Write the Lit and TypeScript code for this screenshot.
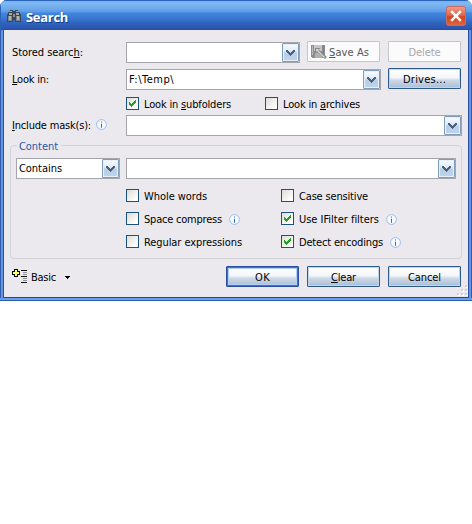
import { LitElement, html, css, svg, nothing } from "lit";
import { customElement, property } from "lit/decorators.js";

/** A line of text spaced out so that it fills a given width. */
@customElement("fit-text")
class FitText extends LitElement {
  @property() text = "";
  @property({ type: Number }) accel = -1;
  @property({ type: Number }) width = 0;
  static styles = css`
    :host { display: block; flex: none; white-space: pre; line-height: 14px; height: 14px; padding-top: 1px; }
    span.line { display: inline-block; }
    u { text-decoration: underline 1px; text-underline-offset: 1px; text-decoration-skip-ink: none; }
  `;
  render() {
    const { text: t, accel: a } = this;
    return html`<span class="line">${a < 0 ? t : html`${t.slice(0, a)}<u>${t[a]}</u>${t.slice(a + 1)}`}</span>`;
  }
  updated() {
    const line = this.renderRoot.querySelector<HTMLElement>(".line")!;
    line.style.letterSpacing = "0px";
    const natural = line.getBoundingClientRect().width;
    if (this.width && natural) line.style.letterSpacing = `${(this.width - natural) / this.text.length}px`;
  }
}

@customElement("combo-box")
class ComboBox extends LitElement {
  @property() value = "";
  @property({ type: Number }) textWidth = 0;
  static styles = css`
    :host { display: flex; flex: none; box-sizing: border-box; height: 21px; border: 1px solid #a5a5ad; background: #fff; justify-content: space-between; }
    fit-text { margin: 2px 0 0 2px; }
    .drop { margin-left: auto; width: 17px; height: 19px; box-sizing: border-box; border: 1px solid #7f9dbb; border-radius: 1px; box-shadow: inset 0 0 0 1px #e6f0fa; background: linear-gradient(#fbfdff 0, #e0ebf6 40%, #b8cee6 55%, #bfd4ea 100%); }
    svg { display: block; }
  `;
  render() {
    return html`${this.value ? html`<fit-text .text=${this.value} .width=${this.textWidth}></fit-text>` : nothing}
      <div class="drop"><svg width="15" height="17" shape-rendering="crispEdges"><path d="M3 6h2v1h1v1h1v1h1v-1h1v-1h1v-1h2v2h-1v1h-1v1h-1v1h-1v1h-1v-1h-1v-1h-1v-1h-1v-1h-1z" fill="#4d5f7e"/></svg></div>`;
  }
}

@customElement("check-box")
class CheckBox extends LitElement {
  @property({ type: Boolean }) checked = false;
  @property() label = "";
  @property({ type: Number }) accel = -1;
  @property({ type: Number }) textWidth = 0;
  static styles = css`
    :host { display: flex; flex: none; height: 13px; }
    .box { width: 13px; height: 13px; box-sizing: border-box; border: 1px solid #1c5180; background: linear-gradient(135deg, #dcdcd7, #fff 85%); margin-right: 5px; }
    svg { display: block; }
  `;
  render() {
    return html`<div class="box">${this.checked
        ? html`<svg width="11" height="11" shape-rendering="crispEdges"><path d="M2 4h1v1h1v1h1v-1h1v-1h1v-1h1v-1h1v3h-1v1h-1v1h-1v1h-1v1h-1v-1h-1v-1h-1z" fill="#21a121"/></svg>`
        : nothing}</div>
      <fit-text .text=${this.label} .accel=${this.accel} .width=${this.textWidth}></fit-text>`;
  }
}

@customElement("push-button")
class PushButton extends LitElement {
  @property() label = "";
  @property() kind = "";
  @property({ type: Number }) accel = -1;
  @property({ type: Number }) textWidth = 0;
  static styles = css`
    :host { display: block; flex: none; width: 73px; }
    .face { height: 21px; box-sizing: border-box; display: flex; justify-content: center; border: 1px solid #2c5a8c; border-radius: 1px; box-shadow: inset 0 0 0 1px #c5d4e6; background: linear-gradient(#fff 0, #f4f6fa 45%, #cdd8e6 60%, #a9bdd6 100%); }
    .face.focus { border-color: #2a50a4; box-shadow: inset 0 0 0 1px #3d72cc, inset 0 0 0 2px #b4cdf3; }
    .face.off { border-color: #c6c5c9; background: #fbfbfc; box-shadow: none; color: #a8a7ab; }
    .face.save { color: #56555d; justify-content: flex-start; padding-left: 3px; }
    fit-text { margin-top: 3px; }
    .save fit-text { margin-left: 2px; }
    svg { display: block; margin-top: 2px; }
  `;
  render() {
    const save = this.kind.includes("save");
    return html`<div class="face ${this.kind}">${save
        ? html`<svg width="16" height="16" viewBox="0 0 16 16" shape-rendering="crispEdges">
            <path d="M0 1h14v13H1v-1H0z" fill="#8d8d8d"/><path d="M3 1h8v6H3z" fill="#c6c6c6"/><path d="M4 9h7v5H4z" fill="#b0b0b0"/><path d="M1 2h1v9H1z" fill="#bbb"/><path d="M12 2h1v11h-1z" fill="#7c7c7c"/>
            <g shape-rendering="auto"><path d="M4 4h5l-1 2 8 7-2 2-8-7-2 1z" fill="#888"/><path d="M5 5h3l-1 1 7 7-1 1-7-7-1 1z" fill="#d4d4d4"/></g></svg>`
        : nothing}<fit-text .text=${this.label} .accel=${this.accel} .width=${this.textWidth}></fit-text></div>`;
  }
}

const info = html`<svg class="info" width="11" height="11"><circle cx="5.5" cy="5.5" r="4.9" fill="#f6faff" stroke="#9dbce8"/><path d="M5 2.5h1v1H5zM5 4.8h1v4H5z" fill="#356cb8"/></svg>`;

const gripDots = [[9, 0], [5, 4], [9, 4], [1, 8], [5, 8], [9, 8]];

@customElement("app-root")
class AppRoot extends LitElement {
  static styles = css`
    :host { display: block; width: 472px; height: 524px; background: #fff; overflow: hidden; font: 11px "DejaVu Sans Condensed", "DejaVu Sans", sans-serif; font-stretch: condensed; color: #000; }
    .dialog { position: relative; box-sizing: border-box; width: 472px; height: 301px; border-radius: 7px 7px 0 0; overflow: hidden; display: flex; flex-direction: column; background: #3565bd; }
    .title { height: 30px; flex: none; box-sizing: border-box; display: flex; padding: 9px 6px 0 7px; color: #fff; box-shadow: inset 1px 1px 0 #2c62b8;
      background: linear-gradient(#2a62b6 0, #71aff0 1px, #7fbaf0 3px, #72abee 8px, #599be7 12px, #4285dc 13px, #3b79d2 18px, #3063be 23px, #2b54ab 29px, #244798 30px); }
    .title .name { font: bold 13px "Open Sans", "Noto Sans", sans-serif; line-height: 14px; text-shadow: 1px 1px 0 #183c8c; margin: 1px 0 0 5px; padding: 0; }
    .close { margin: -3px 0 0 auto; width: 20px; height: 20px; }
    .frame { flex: 1; padding: 0 4px 4px; background: linear-gradient(90deg, #2e5cb0 0 1px, #6595dc 1px 3px, #2850a2 3px 4px, transparent 4px calc(100% - 4px), #2850a2 calc(100% - 4px) calc(100% - 3px), #6595dc calc(100% - 3px) calc(100% - 1px), #2e5cb0 calc(100% - 1px)) 0 0 / 100% calc(100% - 3px) no-repeat, linear-gradient(transparent calc(100% - 4px), #23478f calc(100% - 4px) calc(100% - 3px), #6a9ee6 calc(100% - 3px) calc(100% - 1px), #2e5cb0 calc(100% - 1px)); }
    .body { height: 267px; background: #ebe9ee; display: flex; flex-direction: column; padding: 11px 7px 0 8px; box-sizing: border-box; }
    .row { display: flex; flex: none; }
    .row .cap { width: 114px; display: flex; flex: none; height: 14px; margin-top: 4px; }
    .info { display: block; flex: none; }
    .group { flex: none; height: 114px; margin: 9px -1px 0 -2px; box-sizing: border-box; border: 1px solid #d3d2d6; border-radius: 4px; padding: 12px 5px 0; }
    .group .legend { background: #ebe9ee; width: 44px; height: 14px; margin: -19px 0 0 1px; padding-left: 2px; color: #2857ab; box-sizing: border-box; }
    .opts { display: grid; grid-template-columns: 155px 1fr; row-gap: 10px; margin: 10px 0 0 110px; }
    .opts div { display: flex; height: 13px; }
    .opts .info { margin-top: 2px; }
    .grip { position: absolute; right: 4px; bottom: 4px; }
    .w174 { width: 174px; } .w255 { width: 255px; } .w336 { width: 336px; } .w104 { width: 104px; } .w330 { width: 330px; }
  `;

  option(label: string, width: number, checked: boolean, gap = 0) {
    return html`<div><check-box .label=${label} .textWidth=${width} .checked=${checked}></check-box>${gap
      ? html`<span style="width:${gap}px"></span>${info}`
      : nothing}</div>`;
  }

  render() {
    return html`<div class="dialog">
      <div class="title">
        <svg width="14" height="14" viewBox="0 0 14 14" shape-rendering="crispEdges">
          <path d="M3 1h3v1h2V1h3v2h2v2h1v8H8v-2H6v2H0V5h1V3h2z" fill="#3d4952"/>
          <path d="M3 2h2v1H3zM9 2h2v1H9zM2 4h3v2H2zM9 4h3v2H9z" fill="#9aa7b0"/>
          <path d="M1 7h4v5H1zM9 7h4v5H9z" fill="#7d8588"/><path d="M2 7h2v4H2zM10 7h2v4h-2z" fill="#b2b7b6"/><path d="M6 5h2v3H6z" fill="#8393a0"/>
        </svg>
        <fit-text class="name" .text=${"Search"} .width=${42}></fit-text>
        <svg class="close" viewBox="0 0 20 20">
          <defs><linearGradient id="red" x1="0" y1="0" x2="0" y2="1"><stop offset="0" stop-color="#ef9c87"/><stop offset=".45" stop-color="#df6a4c"/><stop offset=".55" stop-color="#d5431c"/><stop offset="1" stop-color="#de6642"/></linearGradient></defs>
          <rect x=".5" y=".5" width="19" height="19" rx="2" fill="url(#red)" stroke="#c9695f"/>
          <path d="M5.2 5.2l9.6 9.6M14.8 5.2l-9.6 9.6" stroke="#fff" stroke-width="2.5"/>
        </svg>
      </div>
      <div class="frame"><div class="body">
        <div class="row">
          <div class="cap"><fit-text .text=${"Stored search:"} .accel=${12} .width=${71}></fit-text></div>
          <combo-box class="w174" style="margin-top:1px"></combo-box>
          <push-button style="margin-left:7px" kind="off save" label="Save As" .accel=${0} .textWidth=${40}></push-button>
          <push-button style="margin-left:8px" kind="off" label="Delete" .textWidth=${32}></push-button>
        </div>
        <div class="row" style="margin-top:5px">
          <div class="cap"><fit-text .text=${"Look in:"} .accel=${0} .width=${37}></fit-text></div>
          <combo-box class="w255" style="margin-top:1px" .value=${"F:\\Temp\\"} .textWidth=${45}></combo-box>
          <push-button style="margin-left:7px" label="Drives..." .textWidth=${43}></push-button>
        </div>
        <div class="row" style="margin:7px 0 0 114px">
          <check-box checked label="Look in subfolders" .accel=${8} .textWidth=${87}></check-box>
          <check-box style="margin-left:34px" label="Look in archives" .accel=${8} .textWidth=${77}></check-box>
        </div>
        <div class="row" style="margin-top:5px">
          <div class="cap" style="margin-top:3px"><fit-text .text=${"Include mask(s):"} .accel=${0} .width=${79}></fit-text>
            <span style="margin:1px 0 0 5px">${info}</span></div>
          <combo-box class="w336"></combo-box>
        </div>
        <div class="group">
          <div class="legend"><fit-text .text=${"Content"} .width=${39}></fit-text></div>
          <div class="row" style="margin-top:5px">
            <combo-box class="w104" value="Contains" .textWidth=${43}></combo-box>
            <combo-box class="w330" style="margin-left:6px"></combo-box>
          </div>
          <div class="opts">
            ${this.option("Whole words", 63, false)}${this.option("Case sensitive", 69, false)}
            ${this.option("Space compress", 78, false, 7)}${this.option("Use IFilter filters", 80, true, 7)}
            ${this.option("Regular expressions", 98, false)}${this.option("Detect encodings", 84, true, 7)}
          </div>
        </div>
        <div class="row" style="margin-top:7px">
          <svg width="15" height="15" style="margin:3px 4px 0 0" shape-rendering="crispEdges">
            <path d="M2 0h4v2h2v4H6v2H2V6H0V2h2z" fill="#000"/><path d="M3 1h2v2h2v2H5v2H3V5H1V3h2z" fill="#ffff5a"/>
            <path d="M9 1h6v1H9zM9 7h6v1H9zM9 13h6v1H9z" fill="#111"/><path d="M11 3h4v1h-4zM11 5h4v1h-4zM11 9h4v1h-4zM11 11h4v1h-4z" fill="#909090"/>
          </svg>
          <fit-text style="margin-top:4px" .text=${"Basic"} .width=${25}></fit-text>
          <svg width="5" height="3" style="margin:10px 0 0 9px" shape-rendering="crispEdges"><path d="M0 0h5v1H4v1H3v1H2V2H1V1H0z"/></svg>
          <push-button style="margin-left:156px" kind="focus" label="OK" .textWidth=${15}></push-button>
          <push-button style="margin-left:8px" label="Clear" .accel=${0} .textWidth=${25}></push-button>
          <push-button style="margin-left:8px" label="Cancel" .textWidth=${33}></push-button>
        </div>
      </div></div>
      <svg class="grip" width="12" height="12" shape-rendering="crispEdges">${gripDots.map(([x, y]) => svg`<rect x=${x + 1} y=${y + 1} width="2" height="2" fill="#fff"/><rect x=${x} y=${y} width="2" height="2" fill="#d2d0d7"/>`)}</svg>
    </div>`;
  }
}
